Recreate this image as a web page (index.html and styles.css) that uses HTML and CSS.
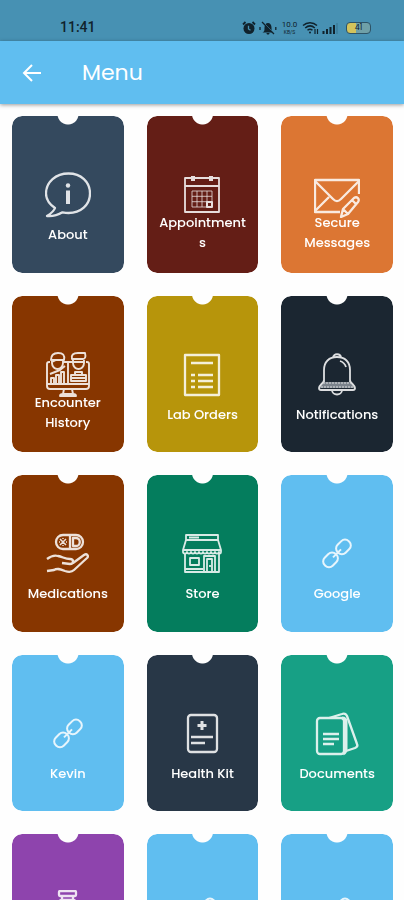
FILE: index.html
```html
<!DOCTYPE html>
<html lang="en">
<head>
    <meta charset="UTF-8">
    <meta name="viewport" content="width=device-width, initial-scale=1.0">
    <title>Menu</title>
    <link rel="stylesheet" href="styles.css">
</head>
<body>
    <div class="status-bar">
        <span class="time">11:41</span>
        <div class="status-icons">
            <svg width="14" height="14" viewBox="0 0 14 14">
                <path d="M1 3.500L3.500 1M13 3.500L10.500 1" stroke="#10222c" stroke-width="1.800"/>
                <circle cx="7" cy="7.500" r="5.500" fill="#10222c"/>
                <path d="M6.500 4.800V8l2 1.300" fill="none" stroke="#4791b3" stroke-width="1.300"/>
            </svg>
            <svg width="18" height="14" viewBox="0 0 18 14">
                <path d="M3.500 11.500c2-1 2-2 2-5C5.500 4 7 2 9 2s3.500 2 3.500 4.500c0 3 0 4 2 5zM7.500 12h3c0 1-.7 1.500-1.500 1.500s-1.500-.5-1.500-1.500z" fill="#10222c"/>
                <path d="M4.500 1.500L16 13" stroke="#4791b3"/>
                <path d="M3 1l12 12M1 6v3M16.800 6v3" stroke="#10222c" stroke-width="1.300"/>
            </svg>
            <span class="speed"><span>10.0</span><small>KB/S</small></span>
            <svg width="17" height="14" viewBox="0 0 17 14" fill="none" stroke="#10222c" stroke-width="1.500">
                <path d="M1 4.500c4-3.700 10-3.700 14 0M3.200 7c3-2.600 6.800-2.600 9.600 0M5.500 9.300c1.500-1.300 3.500-1.300 5 0"/>
                <circle cx="8" cy="11.500" r="1" fill="#10222c" stroke="none"/>
                <path d="M13 8v5M15.500 8v5" stroke-width="1.200"/>
            </svg>
            <svg width="16" height="14" viewBox="0 0 16 14">
                <path d="M1.500 13v-3M5 13V8M8.500 13V6M12 13V4" stroke="#10222c" stroke-width="2"/>
                <path d="M15 13V2" stroke="#3b7c9a" stroke-width="1.500"/>
            </svg>
            <span class="battery">41</span>
        </div>
    </div>

    <header class="app-bar">
        <button class="back" aria-label="Back">
            <svg width="20" height="20" viewBox="0 0 20 20" fill="none" stroke="#fff" stroke-width="2">
                <path d="M19 10H2.500M10 2l-8 8 8 8"/>
            </svg>
        </button>
        <h1>Menu</h1>
    </header>

    <main class="menu">
        <a class="card about" href="#">
            <svg class="icon" viewBox="0 0 46 46">
                <path d="M10 36C4 32 1 27 1 21.500C1 10 11 1.500 23.500 1.500S45 10 45 21.500S35.500 41 23.500 41c-2 0-4-.3-6-.7C13 43 8 44.500 2 44c4-2.500 7-5 8-8z"/>
                <circle class="solid" cx="23" cy="13.500" r="2.200"/>
                <path d="M23 18.500V32" stroke-width="4"/>
            </svg>
            <span class="label">About</span>
        </a>
        <a class="card appointments" href="#">
            <svg class="icon" viewBox="0 0 46 46" stroke-width="1.800">
                <path d="M6 6h34v34H6zM6 14h34"/>
                <path d="M14 4v5M32 4v5" stroke-width="4"/>
                <path d="M13 19h20v16H13zM13 24.300h20M13 29.700h20M18 19v16M23 19v16M28 19v16" stroke-width="1" opacity="0.8"/>
                <path d="M28 30h5v5h-5z" stroke-width="2"/>
            </svg>
            <span class="label two-lines">Appointments</span>
        </a>
        <a class="card messages" href="#">
            <svg class="icon" viewBox="0 0 46 46">
                <path d="M26 40H1V8h44v14"/>
                <path d="M1 9l18 18c3 3 5 3 8 0L45 9M1 39l14-14"/>
                <path d="M27 45l2-8 11-11c3-2 6 1 4 4L34 42zM29 37l5 5M38 28l4 4"/>
            </svg>
            <span class="label two-lines">Secure Messages</span>
        </a>

        <a class="card encounter" href="#">
            <svg class="icon" viewBox="0 0 46 46" stroke-width="1.900">
                <path d="M5 10H4c-2 0-2 1-2 2v22c0 2 1 3 3 3h36c2 0 3-1 3-3V12c0-1 0-2-2-2h-1M2 32h42M18 10h10M19 37l-1 5M27 37l1 5M15 44c0-2 1-2 3-2h10c2 0 3 0 3 2z"/>
                <path d="M6 8c0-5 3-7 7-7 5 0 7 2 6 7zM27 7c-1-4 1-6 6-6h7c1 4 0 6-2 6z"/>
                <path d="M7 8v3c0 4 3 6 5.500 6S18 15 18 11V8M28 8v3c0 4 3 6 5.500 6S39 15 39 11V8M7 10l4-2h7M28 10h11"/>
                <path d="M23 11v21M5 22l10-4 5-4M6 32v-6h3v6M11 32v-9h3v9M16 32V20h3v12"/>
                <path d="M26 29v-6h15v6zM30 23v-3h7v3M26 26h15"/>
            </svg>
            <span class="label two-lines">Encounter History</span>
        </a>
        <a class="card lab" href="#">
            <svg class="icon" viewBox="0 0 46 46">
                <path d="M6 3h34v40H6z"/>
                <path d="M12 11h22M12 23h4M12 29h4M12 35h4M19 23h15M19 29h15M19 35h15" stroke-width="2.600"/>
            </svg>
            <span class="label">Lab Orders</span>
        </a>
        <a class="card notifications" href="#">
            <svg class="icon" viewBox="0 0 46 46" stroke-width="1.800">
                <path class="tint" d="M9 30h28l4 6H5z"/>
                <path d="M19 6c0-5 8-5 8 0M10 30V18C10 10 15 5 23 5s13 5 13 13v12M10 28c0 3-5 5-5 8 0 1 1 2 2 2h32c1 0 2-1 2-2 0-3-5-5-5-8M18 38c0 6 10 6 10 0M26 9c3 1 5 3 6 6"/>
                <path d="M9 31h28M7 35h32" stroke-width="1" stroke-dasharray="2 1"/>
            </svg>
            <span class="label">Notifications</span>
        </a>

        <a class="card medications" href="#">
            <svg class="icon" viewBox="0 0 46 46">
                <rect x="11" y="4" width="27" height="14" rx="7"/>
                <path d="M25 4v14M28 7h3c5 0 5 8 0 8h-3z"/>
                <path d="M15 8l6 6M21 8l-6 6M18 7v1M18 14v1M14 11h1M21 11h1" stroke-width="1.500"/>
                <path d="M2 28c4-3 8-4 11-3 5 1 7 3 12 3 4 0 4 5 0 5l-8-1M28 32l11-8c3-2 5 1 3 3L29 39c-3 3-6 2-9 1-5-2-8-3-11-1l-7 1"/>
            </svg>
            <span class="label">Medications</span>
        </a>
        <a class="card store" href="#">
            <svg class="icon" viewBox="0 0 46 46" stroke-width="1.800">
                <path d="M7 4h32v5H7zM10 6.500h10M7 9L4 19h38L39 9M4 19v2c0 2 4 2 4 0 0 2 4 2 4 0 0 2 4 2 4 0 0 2 4 2 4 0 0 2 4 2 4 0 0 2 4 2 4 0 0 2 4 2 4 0 0 2 4 2 4 0 0 2 4 2 4 0 0 2 2 2 2 0v-2"/>
                <path d="M6 23v18h34V23M6 38h18M11 27h9v7h-9zM25 41V25h11v16M28 41V28h5v13M31 34v2"/>
            </svg>
            <span class="label">Store</span>
        </a>
        <a class="card link" href="#">
            <svg class="icon" viewBox="0 0 46 46">
                <g transform="rotate(-45 23 23)">
                    <rect x="4" y="16" width="18" height="13" rx="6"/>
                    <rect x="25" y="16" width="18" height="13" rx="6"/>
                    <path d="M17 22.500h13"/>
                </g>
            </svg>
            <span class="label">Google</span>
        </a>

        <a class="card link" href="#">
            <svg class="icon" viewBox="0 0 46 46">
                <g transform="rotate(-45 23 23)">
                    <rect x="4" y="16" width="18" height="13" rx="6"/>
                    <rect x="25" y="16" width="18" height="13" rx="6"/>
                    <path d="M17 22.500h13"/>
                </g>
            </svg>
            <span class="label">Kevin</span>
        </a>
        <a class="card kit" href="#">
            <svg class="icon" viewBox="0 0 46 46">
                <rect x="9" y="4" width="29" height="37" rx="3"/>
                <path d="M23 10v9M18.500 14.500h9" stroke-width="3"/>
                <path d="M12 26h22M12 32h14"/>
            </svg>
            <span class="label">Health Kit</span>
        </a>
        <a class="card documents" href="#">
            <svg class="icon" viewBox="0 0 46 46">
                <rect x="3" y="7" width="27" height="36" rx="3"/>
                <path d="M9 23h16M9 28h16M9 33h11"/>
                <path d="M15 7l13-4c2-1 4 0 5 2l10 28c1 2 0 3-2 4l-9 3"/>
                <path d="M28 7c3 0 4 1 4 4v27c0 3-1 4-3 5" stroke-width="3"/>
            </svg>
            <span class="label">Documents</span>
        </a>

        <a class="card bottle" href="#" aria-label="Pharmacy">
            <svg class="icon" viewBox="0 0 46 46">
                <rect x="14" y="1" width="17" height="5" rx="1"/>
                <path d="M17 6v4h11V6M16 10c-4 2-5 4-5 8v25h23V18c0-4-1-6-5-8z"/>
            </svg>
        </a>
        <a class="card link" href="#" aria-label="Link">
            <svg class="icon" viewBox="0 0 46 46">
                <g transform="rotate(-45 23 23)">
                    <rect x="4" y="16" width="18" height="13" rx="6"/>
                    <rect x="25" y="16" width="18" height="13" rx="6"/>
                    <path d="M17 22.500h13"/>
                </g>
            </svg>
        </a>
        <a class="card link" href="#" aria-label="Link">
            <svg class="icon" viewBox="0 0 46 46">
                <g transform="rotate(-45 23 23)">
                    <rect x="4" y="16" width="18" height="13" rx="6"/>
                    <rect x="25" y="16" width="18" height="13" rx="6"/>
                    <path d="M17 22.500h13"/>
                </g>
            </svg>
        </a>
    </main>
</body>
</html>
```

FILE: styles.css
```css
* {
    box-sizing: border-box;
}
body {
    font-family: Poppins, Inter, sans-serif;
    background-color: #fefefe;
    margin: 0;
    height: 100vh;
    display: flex;
    flex-direction: column;
    overflow: hidden;
}

/* Phone status bar */
.status-bar {
    background-color: #4791b3;
    color: #10222c;
    display: flex;
    justify-content: space-between;
    align-items: flex-end;
    flex-shrink: 0;
    height: 41px;
    padding: 0 33px 6px 60px;
}
.time {
    font-family: Roboto, sans-serif;
    font-size: 14px;
    line-height: 16px;
    font-weight: 500;
}
.status-icons {
    display: flex;
    align-items: center;
    gap: 3px;
}
.speed {
    display: flex;
    flex-direction: column;
    font-family: Roboto, sans-serif;
    font-size: 8px;
    line-height: 8px;
    text-align: center;
    width: 19px;
}
.speed small {
    font-size: 5px;
    line-height: 6px;
}
.battery {
    font-size: 8px;
    line-height: 10px;
    width: 25px;
    margin-left: 5px;
    text-align: center;
    border: 1px solid #2d5366;
    border-radius: 4px;
    background: linear-gradient(to right, #d2c35c 40%, #6fa0a8 40%);
}

/* Header */
.app-bar {
    background-color: #60bef0;
    box-shadow: 0 1px 4px rgba(0, 0, 0, 0.4);
    display: flex;
    align-items: center;
    flex-shrink: 0;
    height: 63px;
    padding: 0 22px;
    z-index: 1;
}
.back {
    background: none;
    border: none;
    padding: 0;
    width: 60px;
    height: 20px;
    text-align: left;
    cursor: pointer;
}
.back svg {
    display: block;
}
h1 {
    color: #fff;
    font-size: 22px;
    line-height: 32px;
    font-weight: 400;
    margin: 0;
}

/* Cards */
.menu {
    display: grid;
    grid-template-columns: repeat(3, 1fr);
    align-content: start;
    gap: 23px;
    flex: 1;
    min-height: 0;
    overflow: hidden;
    padding: 12px 11px 0 12px;
}
.card {
    aspect-ratio: 112 / 157;
    border-radius: 10px;
    color: #fff;
    display: flex;
    flex-direction: column;
    align-items: center;
    padding: 56px 11px 0;
    text-decoration: none;
    /* notch cut out of the top edge */
    -webkit-mask: radial-gradient(circle at 50% -2px, transparent 10px, #000 11px);
    mask: radial-gradient(circle at 50% -2px, transparent 10px, #000 11px);
}
.icon {
    width: 46px;
    height: 46px;
    flex-shrink: 0;
    fill: none;
    stroke: #fff;
    stroke-linejoin: round;
    opacity: 0.85;
}
.icon:not([stroke-width]) {
    stroke-width: 2.3;
}
.icon .solid {
    fill: #fff;
    stroke: none;
}
.icon .tint {
    fill: #8c949c;
    stroke: none;
}
.label {
    font-size: 13px;
    line-height: 20px;
    font-weight: 500;
    text-align: center;
    margin-top: 7px;
    max-width: 100%;
    overflow-wrap: anywhere;
}
.label.two-lines {
    margin-top: -5px;
}

.about { background-color: #34495e; }
.appointments { background-color: #641e16; }
.messages { background-color: #dc7633; }
.encounter { background-color: #873600; }
.lab { background-color: #b7950b; }
.notifications { background-color: #1b2631; }
.medications { background-color: #873600; }
.store { background-color: #047d5d; }
.link { background-color: #60bef0; }
.kit { background-color: #283747; }
.documents { background-color: #17a085; }
.bottle { background-color: #8e44ad; }

.link .icon {
    padding: 3px;
}
```
